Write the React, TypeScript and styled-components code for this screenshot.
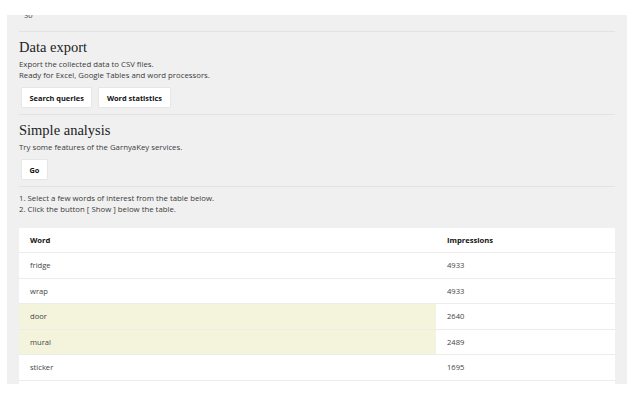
import styled, { createGlobalStyle } from "styled-components";

interface Row {
    word: string;
    impressions: number;
    selected?: boolean;
}

interface CellProps {
    selected?: boolean;
}

const rows: Row[] = [
    { word: "fridge", impressions: 4933 },
    { word: "wrap", impressions: 4933 },
    { word: "door", impressions: 2640, selected: true },
    { word: "mural", impressions: 2489, selected: true },
    { word: "sticker", impressions: 1695 },
];

const GlobalStyle = createGlobalStyle`
    html, body {
        margin: 0;
        background: #ffffff;
    }
    body {
        font-family: "Open Sans", "Noto Sans", sans-serif;
        color: #333333;
    }
`;

const App = () => {
    return (
        <>
            <GlobalStyle />
            <Page>
                <Panel>
                    <Content>
                        <TopValue>30</TopValue>
                        <Section>
                            <Heading>Data export</Heading>
                            <Text>Export the collected data to CSV files.</Text>
                            <Text>Ready for Excel, Google Tables and word processors.</Text>
                            <ButtonRow>
                                <Button>Search queries</Button>
                                <Button>Word statistics</Button>
                            </ButtonRow>
                        </Section>
                        <Section>
                            <Heading>Simple analysis</Heading>
                            <Text>Try some features of the GarnyaKey services.</Text>
                            <ButtonRow>
                                <Button>Go</Button>
                            </ButtonRow>
                        </Section>
                        <Steps>
                            <Text>1. Select a few words of interest from the table below.</Text>
                            <Text>2. Click the button [ Show ] below the table.</Text>
                        </Steps>
                        <Table>
                            <thead>
                                <tr>
                                    <HeadCell>Word</HeadCell>
                                    <HeadCell>Impressions</HeadCell>
                                </tr>
                            </thead>
                            <tbody>
                                {rows.map((row) => (
                                    <tr key={row.word}>
                                        <Cell selected={row.selected}>{row.word}</Cell>
                                        <Cell>{row.impressions}</Cell>
                                    </tr>
                                ))}
                                {/* the rest of the table is scrolled out of view */}
                                <tr>
                                    <Cell />
                                    <Cell />
                                </tr>
                            </tbody>
                        </Table>
                    </Content>
                </Panel>
            </Page>
        </>
    );
};

const Page = styled.div`
    padding: 15px 13px 0 7px;
`;

const Panel = styled.div`
    width: 620px;
    height: 369px;
    overflow: hidden;
    background: #f0f0f0;
`;

// the panel is scrolled a little, so its first row is cut at the top
const Content = styled.div`
    margin-top: -6px;
    padding: 0 12px;
`;

const TopValue = styled.div`
    font-size: 7.6px;
    line-height: 12px;
    padding: 0 0 10px 5px;
    color: #444444;
    border-bottom: 1px solid #e2e2e2;
`;

const Section = styled.div`
    display: flex;
    flex-direction: column;
    padding: 6px 0 6px;
    border-bottom: 1px solid #e2e2e2;
`;

const Heading = styled.h2`
    margin: 0 0 3px;
    font-family: "Liberation Serif", "Times New Roman", serif;
    font-weight: normal;
    font-size: 14.5px;
    line-height: 18px;
    color: #222222;
`;

const Text = styled.p`
    margin: 0;
    font-size: 7.8px;
    line-height: 11px;
    color: #3a3a3a;
`;

const ButtonRow = styled.div`
    display: flex;
    gap: 6px;
    padding: 6px 0 0 2px;
`;

const Button = styled.button`
    height: 21px;
    padding: 0 7.5px;
    border: 1px solid #e6e6e6;
    border-radius: 1px;
    background: #ffffff;
    font-family: "Open Sans", "Noto Sans", sans-serif;
    font-weight: 700;
    font-size: 7.4px;
    color: #111111;
    cursor: pointer;
`;

const Steps = styled.div`
    padding: 6px 0 13px;
`;

const Table = styled.table`
    width: 100%;
    border-collapse: collapse;
    background: #ffffff;
    table-layout: fixed;
`;

const HeadCell = styled.th`
    height: 24px;
    padding: 0 11px;
    text-align: left;
    font-weight: 700;
    font-size: 7.6px;
    color: #111111;
    border-bottom: 1px solid #ececec;

    &:first-child {
        width: 395px;
    }
`;

const Cell = styled.td<CellProps>`
    height: 24.5px;
    padding: 0 11px;
    font-size: 7.6px;
    color: #444444;
    border-bottom: 1px solid #ececec;
    background: ${({ selected }) => (selected ? "#f4f4dc" : "#ffffff")};
`;

export default App;
